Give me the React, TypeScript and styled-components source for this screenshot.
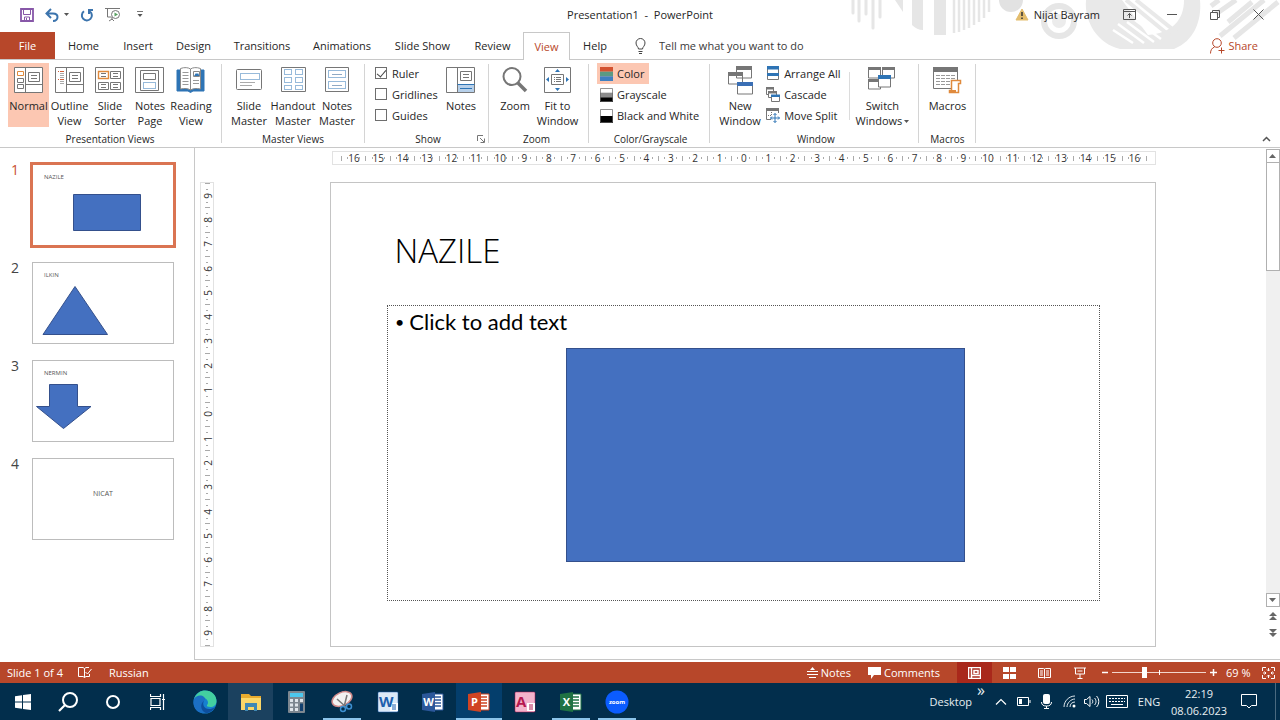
import React from "react";
import styled, { createGlobalStyle, css } from "styled-components";

const INK = "#262626";
const LINE = "#c8c8c8";
const BRAND = "#b7472a";
const BLUE = "#2e74b5";
const GREY = "#767676";
const SHAPE = "#4470c0";

const GlobalStyle = createGlobalStyle`
  * { box-sizing: border-box; }
  body {
    margin: 0;
    background: #fff;
    color: ${INK};
    font-family: "Open Sans", "Noto Sans", sans-serif;
    font-size: 11px;
    line-height: 15px;
  }
  button, input { font: inherit; color: inherit; }
  button { border: 0; padding: 0; background: none; }
  svg { display: block; flex: none; }
`;

const Page = styled.div`
  display: flex;
  flex-direction: column;
  min-height: 100vh;
`;

/* ---------- title bar and tabs ---------- */

const Header = styled.header`
  position: relative;
`;

const Decoration = styled.svg`
  position: absolute;
  top: 0;
  right: 0;
  z-index: -1;
`;

const TitleBar = styled.div`
  display: grid;
  grid-template-columns: 1fr auto 1fr;
  align-items: center;
  height: 30px;
  padding-bottom: 1px;
`;

const QuickAccess = styled.div`
  display: flex;
  align-items: center;
  gap: 11px;
  padding-left: 20px;
`;

const IconButton = styled.button`
  display: flex;
  align-items: center;
  gap: 5px;
`;

const DocTitle = styled.div`
  white-space: pre;
`;

const WindowTools = styled.div`
  display: flex;
  align-items: center;
  justify-content: flex-end;
  padding-right: 16px;
`;

const Account = styled.button`
  display: flex;
  align-items: center;
  gap: 5px;
  margin-right: 16px;
`;

const WindowButton = styled.button<{ $w: number }>`
  display: flex;
  justify-content: flex-end;
  width: ${(p) => p.$w}px;
`;

const TabRow = styled.nav`
  display: flex;
  align-items: stretch;
  height: 30px;
  padding-top: 2px;
  border-bottom: 1px solid ${LINE};
`;

const FileTab = styled.button`
  width: 55px;
  background: ${BRAND};
  color: #fff;
`;

const Tab = styled.button<{ $w: number; $active?: boolean }>`
  width: ${(p) => p.$w}px;
  white-space: nowrap;
  ${(p) =>
    p.$active &&
    css`
      border: 1px solid ${LINE};
      border-bottom: 0;
      margin-bottom: -1px;
      background: #fff;
      color: ${BRAND};
    `}
`;

const TellMe = styled.label`
  display: flex;
  align-items: center;
  gap: 13px;
  margin-left: 15px;
  flex: 1;
  input {
    flex: 1;
    max-width: 200px;
    border: 0;
    padding: 0;
    outline: 0;
    background: none;
  }
  input::placeholder { color: #3a3a3a; opacity: 1; }
`;

const ShareButton = styled.button`
  display: flex;
  align-items: center;
  gap: 3px;
  padding-right: 22px;
  color: ${BRAND};
`;

/* ---------- ribbon ---------- */

const Ribbon = styled.div`
  display: flex;
  height: 88px;
  padding-top: 3px;
  border-bottom: 1px solid ${LINE};
`;

const Group = styled.section<{ $l: number; $r: number }>`
  position: relative;
  display: flex;
  flex-direction: column;
  &::after {
    content: "";
    position: absolute;
    right: 0;
    top: 1px;
    height: 79px;
    border-right: 1px solid #d4d4d4;
  }
  padding: 0 ${(p) => p.$r + 1}px 0 ${(p) => p.$l}px;
`;

const Tools = styled.div`
  display: flex;
  height: 68px;
`;

const Caption = styled.h2`
  margin: 0;
  font-size: 10px;
  font-weight: 400;
  line-height: 16px;
  text-align: center;
`;

const Launcher = styled.button`
  position: absolute;
  right: 4px;
  bottom: 4px;
`;

const Large = styled.button<{ $w: number; $active?: boolean }>`
  display: flex;
  flex-direction: column;
  align-items: center;
  gap: 3px;
  width: ${(p) => p.$w}px;
  height: 64px;
  padding-top: 3px;
  white-space: nowrap;
  background: ${(p) => (p.$active ? "#fcc7b2" : "none")};
`;

const LargeLabel = styled.span`
  display: block;
  white-space: pre-line;
  svg { display: inline-block; margin-left: 2px; vertical-align: 2px; }
`;

const Stack = styled.div<{ $gap?: number }>`
  display: flex;
  flex-direction: column;
  align-items: flex-start;
  margin-right: ${(p) => p.$gap ?? 0}px;
`;

const Small = styled.button<{ $active?: boolean }>`
  display: flex;
  align-items: center;
  gap: 4px;
  height: 21px;
  padding: 0 5px 0 3px;
  white-space: nowrap;
  background: ${(p) => (p.$active ? "#fcc7b2" : "none")};
`;

const Check = styled.label`
  display: flex;
  align-items: center;
  gap: 5px;
  width: 66px;
  height: 21px;
  input {
    appearance: none;
    position: relative;
    flex: none;
    width: 12px;
    height: 12px;
    margin: 0 0 2px;
    border: 1px solid #6e6e6e;
    background: #fff;
  }
  input:checked::after {
    content: "";
    position: absolute;
    left: 3px;
    top: 0;
    width: 4px;
    height: 8px;
    border: solid #444;
    border-width: 0 1px 1px 0;
    transform: rotate(40deg);
  }
`;

const Divider = styled.div`
  width: 1px;
  height: 48px;
  margin-top: 9px;
  background: #dcdcdc;
`;

const Collapse = styled.button`
  align-self: flex-end;
  margin: 0 9px 5px auto;
`;

/* ---------- work area ---------- */

const Work = styled.main`
  display: flex;
  flex: 1;
`;

const SlideList = styled.ol`
  display: flex;
  flex-direction: column;
  gap: 16px;
  width: 195px;
  margin: 0 0 2px;
  padding: 16px 0 0 11px;
  list-style: none;
  border-right: 1px solid ${LINE};
`;

const SlideItem = styled.li`
  display: flex;
`;

const SlideNumber = styled.span<{ $active?: boolean }>`
  width: 21px;
  font-size: 14px;
  line-height: 12px;
  color: ${(p) => (p.$active ? "#c9502f" : "#444")};
`;

const Thumb = styled.button<{ $active?: boolean }>`
  position: relative;
  width: 142px;
  height: 82px;
  border: 1px solid ${(p) => (p.$active ? "#fff" : "#bcbcbc")};
  background: #fff;
  ${(p) =>
    p.$active &&
    css`
      outline: 3px solid #da7452;
      outline-offset: -1px;
    `}
`;

const ThumbTitle = styled.span<{ $centered?: boolean }>`
  position: absolute;
  left: 11px;
  top: 8px;
  font-size: 6px;
  line-height: 8px;
  color: #555;
  ${(p) =>
    p.$centered &&
    css`
      left: 0;
      right: 0;
      top: 31px;
      font-size: 7px;
      text-align: center;
    `}
`;

const Editor = styled.div`
  display: grid;
  grid-template-columns: 14px 1fr;
  grid-template-rows: 14px auto;
  align-content: start;
  row-gap: 17px;
  flex: 1;
  padding: 3px 0 0 5px;
  margin-bottom: 2px;
  border-bottom: 1px solid ${LINE};
`;

const TopRuler = styled.div`
  grid-column: 2;
  display: flex;
  align-items: center;
  margin: 0 109px 0 118px;
  padding: 0 8px;
  border: 1px solid #e2e2e2;
`;

const SideRuler = styled.div`
  display: flex;
  flex-direction: column;
  align-items: center;
  border: 1px solid #e2e2e2;
`;

const Mark = styled.span<{ $side?: boolean }>`
  display: flex;
  flex: 1;
  align-items: center;
  justify-content: center;
  flex-direction: ${(p) => (p.$side ? "column" : "row")};
  min-width: 0;
  min-height: 0;
  font-size: 10px;
  line-height: 12px;
  color: #333;
  b {
    width: 11px;
    font-weight: 400;
    text-align: center;
    transform: ${(p) => (p.$side ? "rotate(-90deg)" : "none")};
  }
  i {
    width: ${(p) => (p.$side ? 2 : 1)}px;
    height: ${(p) => (p.$side ? 1 : 2)}px;
    background: #aaa;
  }
`;

const Tick = styled.span<{ $side?: boolean }>`
  width: ${(p) => (p.$side ? 5 : 1)}px;
  height: ${(p) => (p.$side ? 1 : 5)}px;
  background: #aaa;
`;

const Slide = styled.article`
  position: relative;
  margin: 0 109px 0 116px;
  aspect-ratio: 16 / 9;
  border: 1px solid #c4c4c4;
`;

const SlideTitle = styled.h1`
  position: absolute;
  left: 7.7%;
  top: 9.9%;
  margin: 0;
  font-family: "Open Sans", sans-serif;
  font-size: 33px;
  font-weight: 300;
  line-height: 44px;
  color: #000;
`;

const Placeholder = styled.ul`
  position: absolute;
  left: 6.8%;
  top: 26.4%;
  width: 86.5%;
  height: 64%;
  margin: 0;
  padding: 3px 0 0 7px;
  list-style: none;
  border: 1px dotted #555;
  font-family: Lato, sans-serif;
  font-size: 22px;
  line-height: 26px;
  color: #000;
  li { display: flex; gap: 5px; }
  span { font-size: 16px; }
`;

const Rectangle = styled.div`
  position: absolute;
  left: 28.5%;
  top: 35.6%;
  width: 48.4%;
  height: 46.3%;
  border: 1px solid #34508c;
  background: ${SHAPE};
`;

const ScrollBar = styled.div`
  display: flex;
  flex-direction: column;
  align-items: center;
  width: 15px;
  margin-bottom: 2px;
  padding-top: 1px;
  border-bottom: 1px solid ${LINE};
`;

const ScrollButton = styled.button`
  display: flex;
  align-items: center;
  justify-content: center;
  width: 14px;
  height: 14px;
  border: 1px solid #b0b0b0;
  background: #fff;
`;

const ScrollTrack = styled.div`
  flex: 1;
  width: 14px;
  background: #f0f0f0;
`;

const ScrollThumb = styled.div`
  height: 25%;
  border: 1px solid #b0b0b0;
  border-top: 0;
  background: #fff;
`;

const PageJump = styled.button`
  height: 17px;
  &:last-child { margin-bottom: 18px; }
`;

/* ---------- status bar ---------- */

const StatusBar = styled.footer`
  display: flex;
  align-items: center;
  height: 21px;
  padding-left: 7px;
  background: ${BRAND};
  color: #fff;
`;

const StatusText = styled.span`
  margin-right: 15px;
`;

const Spacer = styled.div`
  flex: 1;
`;

const StatusButton = styled.button`
  display: flex;
  align-items: center;
  gap: 3px;
  margin-right: 17px;
`;

const ViewButton = styled.button<{ $active?: boolean }>`
  display: flex;
  align-items: center;
  justify-content: center;
  width: 35px;
  height: 21px;
  background: ${(p) => (p.$active ? "#a9281b" : "none")};
`;

const ZoomRange = styled.input`
  appearance: none;
  width: 94px;
  height: 13px;
  margin: 0 4px;
  background:
    linear-gradient(#fff, #fff) 50% 50% / 1px 5px no-repeat,
    linear-gradient(#f3d5cc, #f3d5cc) 0 50% / 100% 1px no-repeat;
  &::-webkit-slider-thumb {
    appearance: none;
    width: 5px;
    height: 11px;
    background: #fff;
  }
`;

const ZoomValue = styled.button`
  width: 24px;
  margin: 0 12px 0 9px;
  white-space: nowrap;
`;

const FitButton = styled.button`
  margin-right: 5px;
`;

/* ---------- taskbar ---------- */

const TaskBar = styled.nav`
  display: flex;
  height: 37px;
  background: #022e4c;
  color: #e8eef2;
`;

const TaskButton = styled.button<{ $w: number; $open?: boolean; $bg?: string }>`
  display: flex;
  align-items: center;
  justify-content: center;
  width: ${(p) => p.$w}px;
  background: ${(p) => p.$bg ?? "none"};
  ${(p) =>
    p.$open &&
    css`
      background-image: linear-gradient(#8cc4ea, #8cc4ea);
      background-size: ${p.$bg ? "100%" : "38px"} 2px;
      background-position: bottom;
      background-repeat: no-repeat;
    `}
`;

const SystemGroup = styled.div`
  display: flex;
  margin-right: 2px;
`;

const Tray = styled.div`
  display: flex;
  align-items: center;
`;

const TrayButton = styled.button<{ $w: number }>`
  display: flex;
  justify-content: center;
  width: ${(p) => p.$w}px;
`;

const More = styled.button`
  align-self: flex-start;
  width: 18px;
  font-size: 16px;
  line-height: 14px;
`;

const Clock = styled.time`
  width: 66px;
  line-height: 17px;
  text-align: center;
`;

const ShowDesktop = styled.button`
  width: 5px;
  height: 100%;
  border-left: 1px solid #4a6a80;
`;

/* ---------- icons ---------- */

type P = { children: React.ReactNode; w?: number; h?: number; c?: string };
const Ico = ({ children, w = 30, h = 29, c = GREY }: P) => (
  <svg width={w} height={h} viewBox={`0 0 ${w} ${h}`} fill="none" stroke={c} aria-hidden="true">
    {children}
  </svg>
);

const NormalIcon = () => (
  <Ico>
    <path d="M.5 1.5h28v25h-28z" fill="#fff" />
    <path d="M11.5 1.5v25M11.5 18.5h17" />
    <path d="M3.500 5.500h6v4h-6z" stroke="#e08a3c" />
    <path d="M3.500 12.500h6v4h-6zM3.500 18.500h6v4h-6z" />
    <path d="M14.500 6.500h11v9h-11zM17 9.500h6M17 12.500h6" />
  </Ico>
);
const OutlineIcon = () => (
  <Ico>
    <path d="M.5 1.500h28v25h-28zM11.500 1.500v25M11.500 18.500h17M14.500 6.500h11v9h-11zM17 9.500h6M17 12.500h6" />
    <path d="M3 5.500h1M5 5.500h4M3 13.500h1M5 13.500h4" stroke="#d0603a" />
    <path d="M5 7.500h4M5 9.500h4M5 11.500h4M5 15.500h4M5 17.500h4" stroke="#aaa" />
  </Ico>
);
const SorterIcon = () => (
  <Ico>
    <path d="M.5 1.500h28v25h-28zM15.500 5.500h10v7h-10zM3.500 16.500h10v7h-10zM15.500 16.500h10v7h-10zM18 7.500h5M18 10.500h5M6 18.500h5M6 21.500h5M18 18.500h5M18 21.500h5" />
    <path d="M3.500 5.500h10v7h-10z" stroke="#e08a3c" strokeWidth="1.400" />
    <path d="M6 7.500h5M6 10.500h5" />
  </Ico>
);
const NotesPageIcon = () => (
  <Ico>
    <path d="M.5 1.500h28v25h-28zM5.500 4.500h18v20h-18zM8.500 7.500h12v6h-12z" />
    <path d="M8.500 16.500h12v6h-12z" stroke={BLUE} strokeDasharray="1 1" />
  </Ico>
);
const ReadingIcon = () => (
  <Ico>
    <path d="M1 4h27v21H17l-2.500 1.500L12 25H1z" fill={BLUE} stroke={BLUE} />
    <path d="M4.500 2.500c4-1.500 8-1 10 .5v21c-2-1.500-6-2-10-1zM24.500 2.500c-4-1.500-8-1-10 .5v21c2-1.500 6-2 10-1z" fill="#fff" stroke="#8a8a8a" />
    <path d="M6.500 6.500h6M6.500 9.500h6M6.500 12.500h6M6.500 15.500h6M6.500 18.500h6M17 14.500h6M17 17.500h6" stroke="#999" />
    <path d="M17.500 10.500v-5h6v5z" stroke="#888" />
    <path d="M18 10l2-3 1 1 1-1 1.500 3z" fill={BLUE} stroke="none" />
  </Ico>
);
const SlideMasterIcon = () => (
  <Ico>
    <rect x="2.500" y="3.500" width="25" height="20" rx="1" />
    <path d="M6.500 7.500h19v6h-19z" stroke={BLUE} strokeDasharray="1 1" />
    <path d="M6 16.500h15M6 19.500h12" stroke="#aaa" />
  </Ico>
);
const HandoutIcon = () => (
  <Ico>
    <path d="M3.500 1.500h24v24h-24z" />
    <path d="M6.500 3.500h7v5h-7zM17.500 3.500h7v5h-7zM6.500 11.500h7v5h-7zM17.500 11.500h7v5h-7zM6.500 19.500h7v4h-7zM17.500 19.500h7v4h-7z" stroke={BLUE} strokeDasharray="1 1" />
  </Ico>
);
const NotesMasterIcon = () => (
  <Ico>
    <path d="M3.500 1.500h23v24h-23z" />
    <path d="M6.500 4.500h17v7h-17zM6.500 15.500h17v7h-17z" stroke={BLUE} strokeDasharray="1 1" />
    <path d="M10 8.500h10M10 19.500h10" stroke="#8fa9c4" />
  </Ico>
);
const NotesIcon = () => (
  <Ico>
    <path d="M12 18h17v8H12z" fill="#b7d0ea" stroke="none" />
    <path d="M.5 1.500h28v25h-28zM11.500 1.500v25M14.500 5.500h11v9h-11zM17 8.500h6M17 11.500h6" />
    <path d="M11.500 18.500h17M14 22.500h12" stroke={BLUE} />
  </Ico>
);
const ZoomIcon = () => (
  <Ico>
    <circle cx="12" cy="10.500" r="8.500" strokeWidth="2" />
    <path d="M18 17l8 8" strokeWidth="3.500" />
  </Ico>
);
const FitIcon = () => (
  <Ico>
    <path d="M1.500 1.500h26v25h-26zM8.500 8.500h12v10h-12zM11 11.500h1M13 11.500h5M11 13.500h1M13 13.500h5M11 15.500h1M13 15.500h5" />
    <path d="M14.500 3l2.500 3h-5zM14.500 25l2.500-3h-5zM3 13.500l3-2.500v5zM26 13.500l-3-2.500v5z" fill={BLUE} stroke="none" />
  </Ico>
);
const NewWindowIcon = () => (
  <Ico>
    <path d="M11.500 3v9h15V3zM3.500 9v9h14V9z" fill="#fff" />
    <path d="M11 0h16v4H11zM3 6h15v4H3z" fill={GREY} stroke="none" />
    <path d="M12.500 17v11h15V17z" fill="#fff" />
    <path d="M12 16h16v4H12z" fill="#3a6fb5" stroke="none" />
  </Ico>
);
const SwitchIcon = () => (
  <Ico>
    <path d="M1.500 3v9h12V3zM15.500 3v9h12V3zM1.500 14v9h12v-9z" fill="#fff" />
    <path d="M1 1h13v3H1zM15 1h13v3H15zM1 13h13v3H1z" fill={GREY} stroke="none" />
    <path d="M11.500 11v10h12V11z" fill="#fff" />
    <path d="M11 9h13v4H11z" fill={BLUE} stroke="none" />
  </Ico>
);
const MacrosIcon = () => (
  <Ico>
    <path d="M1.500 2.500h24v20h-24z" fill="#fff" />
    <path d="M1 1h25v5H1z" fill={GREY} stroke="none" />
    <path d="M4 9.500h19M4 12.500h19M4 15.500h14M4 18.500h14" strokeDasharray="4 1" stroke="#999" />
    <path d="M19.500 14.500h9v3h-2v9h-9v-2h2z" fill="#fff" stroke="#e08a3c" strokeWidth="1.500" />
    <path d="M17 24h7v3h-7z" fill="#e08a3c" stroke="none" />
  </Ico>
);

const Swatch = ({ colors }: { colors: string[] }) => (
  <Ico w={13} h={14}>
    {colors.map((c, i) => {
      const h = 14 / colors.length;
      return <rect key={i} x="0" y={i * h} width="13" height={h} fill={c} stroke="none" />;
    })}
    {colors.includes("#fff") && <path d="M.5 .5h12v13H.5z" stroke="#666" strokeWidth=".7" />}
  </Ico>
);
const ArrangeIcon = () => (
  <Ico w={14} h={15}>
    <path d="M1.500 1.500h11v12h-11z" fill="#fff" />
    <path d="M1 0h12v3.500H1zM1 7h12v3H1z" fill={BLUE} stroke="none" />
  </Ico>
);
const CascadeIcon = () => (
  <Ico w={14} h={15}>
    <path d="M.5 1.500h7v6h-7z" fill="#fff" />
    <path d="M0 0h8v2.500H0z" fill={GREY} stroke="none" />
    <path d="M2.500 5.500h8v5h-8z" fill="#fff" />
    <path d="M2 4h9v2.500H2z" fill={GREY} stroke="none" />
    <path d="M5.500 9.500h8v5h-8z" fill="#fff" />
    <path d="M5 7.500h9v2.500H5z" fill={BLUE} stroke="none" />
  </Ico>
);
const SplitIcon = () => (
  <Ico w={14} h={15}>
    <path d="M5 11.500H.5V1.500h12V5" />
    <path d="M0 0h13v3H0z" fill={GREY} stroke="none" />
    <path d="M2 7.500h4M5.500 4v3" strokeDasharray="1 1" />
    <path d="M9 5.500v9M4.500 10h9M7.500 7L9 5.500 10.500 7M7.500 13L9 14.500l1.500-1.500M6 8.500L4.500 10 6 11.500M12 8.500l1.500 1.500-1.500 1.500" stroke={BLUE} />
  </Ico>
);
const Caret = ({ c = "#555" }: { c?: string }) => (
  <Ico w={5} h={3}>
    <path d="M0 0h5L2.500 3z" fill={c} stroke="none" />
  </Ico>
);

const Backdrop = () => (
  <Decoration width="430" height="50" viewBox="0 0 430 50" fill="none" stroke="#e6e6e6" aria-hidden="true">
    <g strokeWidth="3" strokeLinecap="round">
      <path d="M3 0v13M9 0v21M16 0v14M23 0v28M30 0v17" />
    </g>
    <path d="M45 0h8v12zM62 0h11v30c-4 0-8-2-11-5zM84 0h12v35H84z" fill="#e6e6e6" stroke="none" />
    <path d="M104 0v33M109 0v32M114 0v30M119 0v28M124 0v25M129 0v22M134 0v18M139 0v12" strokeWidth="2.500" />
    <circle cx="161" cy="0" r="12" fill="#e2e2e2" stroke="none" />
    <circle cx="209" cy="21" r="15" strokeWidth="6" />
    <circle cx="209" cy="21" r="7" fill="#ececec" stroke="none" />
    <path d="M236 0c-2 22 12 44 34 49h54c20-8 28-28 26-49h-16c0 20-12 33-36 35L272 0z" fill="#e9e9e9" stroke="none" />
    <path d="M276 0l44 36M286 0l40 32" stroke="#e9e9e9" strokeWidth="4" />
    <path d="M263 30l20 13M268 24l26 19M277 22l27 20M285 20l26 19" stroke="#fff" strokeWidth="2.500" />
    <path d="M361 6l8-6M366 14L386 0M370 36L414 0M378 22l24-20M384 38l44-36" strokeWidth="5" />
  </Decoration>
);

/* ---------- content ---------- */

const presentationViews: [string, () => React.JSX.Element, number][] = [
  ["Normal", NormalIcon, 41],
  ["Outline\nView", OutlineIcon, 41],
  ["Slide\nSorter", SorterIcon, 40],
  ["Notes\nPage", NotesPageIcon, 40],
  ["Reading\nView", ReadingIcon, 42],
];
const masterViews: [string, () => React.JSX.Element][] = [
  ["Slide\nMaster", SlideMasterIcon],
  ["Handout\nMaster", HandoutIcon],
  ["Notes\nMaster", NotesMasterIcon],
];
const tabs: [string, number][] = [
  ["Home", 57],
  ["Insert", 52],
  ["Design", 59],
  ["Transitions", 78],
  ["Animations", 82],
  ["Slide Show", 79],
  ["Review", 61],
  ["View", 47],
  ["Help", 50],
];

const scale = (n: number) => Array.from({ length: n * 2 + 1 }, (_, i) => Math.abs(n - i));

const Marks = ({ max, side }: { max: number; side?: boolean }) => (
  <>
    <Tick $side={side} />
    {scale(max).map((n, i) => (
      <React.Fragment key={i}>
        <Mark $side={side}>
          <i />
          <b>{n}</b>
          <i />
        </Mark>
        <Tick $side={side} />
      </React.Fragment>
    ))}
  </>
);

const ThumbShape = ({ d }: { d: string }) => (
  <svg width="140" height="80" viewBox="0 0 140 80" fill={SHAPE} stroke="#34508c" aria-hidden="true">
    <path d={d} />
  </svg>
);

const slides = [
  { title: "NAZILE", d: "M40.500 29.500h67v36h-67z" },
  { title: "ILKIN", d: "M42 23.500L74.500 71.500H10z" },
  { title: "NERMIN", d: "M16.500 23.500h28v22h13.500L30.500 67.500 3.500 45.500h13z" },
  { title: "NICAT", d: "" },
];

const OfficeIcon = ({ letter, color, light }: { letter: string; color: string; light?: boolean }) => (
  <svg width="22" height="22" viewBox="0 0 22 22" aria-hidden="true">
    {light ? (
      <>
        <rect x="1" y="1" width="20" height="20" rx="1" fill={color === "#b5174f" ? "#f3b3cc" : "#dbe9f7"} stroke={color} strokeWidth=".5" />
        <path d="M13 12h8v8h-8z" fill="#fff" />
        <path d="M15 14h4M15 16h4M15 18h4" stroke={color} />
        <text x="2" y="16" fontSize="15" fontWeight="700" fill={color}>{letter}</text>
      </>
    ) : (
      <>
        <path d="M11 3h10v16H11z" fill="#fff" stroke={color} />
        <path d="M13 6h6M13 9h6M13 12h6M13 15h6" stroke={color} strokeWidth="1.500" />
        <path d="M0 3l13-2v20L0 19z" fill={color} />
        <text x="6.500" y="15" fontSize="11" fontWeight="700" textAnchor="middle" fill="#fff">{letter}</text>
      </>
    )}
  </svg>
);

export default function App() {
  return (
    <Page>
      <GlobalStyle />
      <Header>
        <Backdrop />
        <TitleBar>
          <QuickAccess>
            <IconButton aria-label="Save">
              <Ico w={14} h={14} c="#8757a8">
                <path d="M1 1h12v12H1z" strokeWidth="1.800" />
                <path d="M3.500 1.500v5h7v-5M4.500 13v-4h5v4M6.500 10v3" />
              </Ico>
            </IconButton>
            <IconButton aria-label="Undo">
              <Ico w={14} h={14} c="#3c74ad">
                <path d="M1.500 5.500h6.500c3 0 4.500 1.500 4.500 3.500s-1.500 4-4.500 4M6 1L1.500 5.500 6 10" strokeWidth="2" />
              </Ico>
              <Caret />
            </IconButton>
            <IconButton aria-label="Redo">
              <Ico w={14} h={14} c="#3c74ad">
                <path d="M4 3.300a5 5 0 1 0 6 .2M13 2H9v4" strokeWidth="2" />
              </Ico>
            </IconButton>
            <IconButton aria-label="Start from beginning">
              <Ico w={16} h={15}>
                <path d="M0 1.500h15M2.500 2v8h4M7 10v3M4 14l3-2 2 2" />
                <circle cx="10.500" cy="7.500" r="4" fill="#fff" />
                <path d="M9.500 5.500l3.500 2-3.500 2z" fill="#57a05f" stroke="none" />
              </Ico>
            </IconButton>
            <IconButton aria-label="Customize quick access toolbar">
              <Ico w={16} h={7}>
                <path d="M5 .5h6" />
                <path d="M5.500 3h5L8 6z" fill="#555" stroke="none" />
              </Ico>
            </IconButton>
          </QuickAccess>
          <DocTitle>{"Presentation1  -  PowerPoint"}</DocTitle>
          <WindowTools>
            <Account>
              <Ico w={14} h={13}>
                <path d="M7 1l6 11H1z" fill="#e3bd6e" stroke="#e3bd6e" strokeLinejoin="round" />
                <path d="M7 4v4M7 9.500v1.500" stroke="#333" strokeWidth="1.500" />
              </Ico>
              Nijat Bayram
            </Account>
            <WindowButton $w={20} aria-label="Ribbon display options">
              <Ico w={13} h={11} c="#555">
                <path d="M.5 .5h12v10H.5zM.5 2.500h12M6.500 9V4.500M4.500 6.500l2-2 2 2" />
              </Ico>
            </WindowButton>
            <WindowButton $w={41} aria-label="Minimize">
              <Ico w={10} h={1} c="#555"><path d="M0 .5h10" /></Ico>
            </WindowButton>
            <WindowButton $w={43} aria-label="Restore">
              <Ico w={10} h={10} c="#555"><path d="M.5 2.500h7v7h-7zM2.500 2.500v-2h7v7h-2" /></Ico>
            </WindowButton>
            <WindowButton $w={44} aria-label="Close">
              <Ico w={11} h={11} c="#555"><path d="M.5 .5l10 10M10.500 .5l-10 10" /></Ico>
            </WindowButton>
          </WindowTools>
        </TitleBar>
        <TabRow>
          <FileTab>File</FileTab>
          {tabs.map(([name, w]) => (
            <Tab key={name} $w={w} $active={name === "View"}>{name}</Tab>
          ))}
          <TellMe>
            <Ico w={11} h={16} c="#444">
              <path d="M3.500 11c0-2-2.500-3-2.500-6a4.500 4.500 0 0 1 9 0c0 3-2.500 4-2.500 6zM3.500 13.500h4M4 15.500h3" />
            </Ico>
            <input aria-label="Tell me what you want to do" placeholder="Tell me what you want to do" />
          </TellMe>
          <ShareButton>
            <Ico w={15} h={16} c={BRAND}>
              <circle cx="7" cy="5" r="4.300" />
              <path d="M.5 15.500c0-3.500 1.500-5.500 4-6.500M8.500 12.500h6M11.500 9.500v6" />
            </Ico>
            Share
          </ShareButton>
        </TabRow>
      </Header>

      <Ribbon>
        <Group $l={8} $r={9}>
          <Tools>
            {presentationViews.map(([label, Icon, w]) => (
              <Large key={label} $w={w} $active={label === "Normal"}>
                <Icon />
                <LargeLabel>{label}</LargeLabel>
              </Large>
            ))}
          </Tools>
          <Caption>Presentation Views</Caption>
        </Group>
        <Group $l={5} $r={5}>
          <Tools>
            {masterViews.map(([label, Icon]) => (
              <Large key={label} $w={44}>
                <Icon />
                <LargeLabel>{label}</LargeLabel>
              </Large>
            ))}
          </Tools>
          <Caption>Master Views</Caption>
        </Group>
        <Group $l={10} $r={7}>
          <Tools>
            <Stack>
              <Check><input type="checkbox" defaultChecked />Ruler</Check>
              <Check><input type="checkbox" />Gridlines</Check>
              <Check><input type="checkbox" />Guides</Check>
            </Stack>
            <Large $w={40}>
              <NotesIcon />
              <LargeLabel>Notes</LargeLabel>
            </Large>
          </Tools>
          <Caption>Show</Caption>
          <Launcher aria-label="Show options">
            <Ico w={8} h={8}><path d="M.5 6V.5H6M3 3l4 4M7.500 3.500v4h-4" /></Ico>
          </Launcher>
        </Group>
        <Group $l={5} $r={9}>
          <Tools>
            <Large $w={42}><ZoomIcon /><LargeLabel>Zoom</LargeLabel></Large>
            <Large $w={43}><FitIcon /><LargeLabel>{"Fit to\nWindow"}</LargeLabel></Large>
          </Tools>
          <Caption>Zoom</Caption>
        </Group>
        <Group $l={8} $r={5}>
          <Tools>
            <Stack>
              <Small $active><Swatch colors={["#d35230", "#5b9a83", "#3f7fc0"]} />Color</Small>
              <Small><Swatch colors={["#fff", "#8c8c8c", "#000"]} />Grayscale</Small>
              <Small><Swatch colors={["#fff", "#000"]} />Black and White</Small>
            </Stack>
          </Tools>
          <Caption>Color/Grayscale</Caption>
        </Group>
        <Group $l={7} $r={4}>
          <Tools>
            <Large $w={46}><NewWindowIcon /><LargeLabel>{"New\nWindow"}</LargeLabel></Large>
            <Stack $gap={4}>
              <Small><ArrangeIcon />Arrange All</Small>
              <Small><CascadeIcon />Cascade</Small>
              <Small><SplitIcon />Move Split</Small>
            </Stack>
            <Divider />
            <Large $w={64}><SwitchIcon /><LargeLabel>{"Switch\nWindows"}<Caret /></LargeLabel></Large>
          </Tools>
          <Caption>Window</Caption>
        </Group>
        <Group $l={4} $r={4}>
          <Tools>
            <Large $w={48}><MacrosIcon /><LargeLabel>Macros</LargeLabel></Large>
          </Tools>
          <Caption>Macros</Caption>
        </Group>
        <Collapse aria-label="Collapse the ribbon">
          <Ico w={9} h={6} c="#555"><path d="M1 5l3.500-3.500L8 5" strokeWidth="1.500" /></Ico>
        </Collapse>
      </Ribbon>

      <Work>
        <SlideList>
          {slides.map((s, i) => (
            <SlideItem key={s.title}>
              <SlideNumber $active={i === 0}>{i + 1}</SlideNumber>
              <Thumb $active={i === 0}>
                {s.d && <ThumbShape d={s.d} />}
                <ThumbTitle $centered={!s.d}>{s.title}</ThumbTitle>
              </Thumb>
            </SlideItem>
          ))}
        </SlideList>
        <Editor>
          <TopRuler><Marks max={16} /></TopRuler>
          <SideRuler><Marks max={9} side /></SideRuler>
          <Slide>
            <SlideTitle>NAZILE</SlideTitle>
            <Placeholder>
              <li><span>•</span>Click to add text</li>
            </Placeholder>
            <Rectangle />
          </Slide>
        </Editor>
        <ScrollBar>
          <ScrollButton aria-label="Scroll up">
            <Ico w={7} h={4}><path d="M0 4h7L3.500 0z" fill="#666" stroke="none" /></Ico>
          </ScrollButton>
          <ScrollTrack><ScrollThumb /></ScrollTrack>
          <ScrollButton aria-label="Scroll down">
            <Ico w={7} h={4}><path d="M0 0h7L3.500 4z" fill="#666" stroke="none" /></Ico>
          </ScrollButton>
          <PageJump aria-label="Previous slide">
            <Ico w={8} h={8}><path d="M0 4h8L4 0zM0 8h8L4 4z" fill="#666" stroke="none" /></Ico>
          </PageJump>
          <PageJump aria-label="Next slide">
            <Ico w={8} h={8}><path d="M0 0h8L4 4zM0 4h8L4 8z" fill="#666" stroke="none" /></Ico>
          </PageJump>
        </ScrollBar>
      </Work>

      <StatusBar>
        <StatusText>Slide 1 of 4</StatusText>
        <StatusButton aria-label="Spelling">
          <Ico w={14} h={13} c="#fff">
            <path d="M6.500 11.500L5 10.500H.5v-9H5l1.500 1 1.500-1h3M6.500 2.500v9l1.500-1h3.500V8M7.500 6l2 2 4-5" />
          </Ico>
        </StatusButton>
        <StatusText>Russian</StatusText>
        <Spacer />
        <StatusButton>
          <Ico w={11} h={11} c="#fff"><path d="M0 4.500h11M0 7.500h11M2 10.500h7" /><path d="M5.500 0L8 3H3z" fill="#fff" stroke="none" /></Ico>
          Notes
        </StatusButton>
        <StatusButton>
          <Ico w={13} h={13}><path d="M0 1h13v8H6l-3 4V9H0z" fill="#fff" stroke="none" /></Ico>
          Comments
        </StatusButton>
        <ViewButton $active aria-label="Normal view">
          <Ico w={13} h={12} c="#fff"><path d="M.5 .5h12v11H.5zM3.500 .5v11M3.500 8.500h9M6 3.500h4v3H6z" strokeWidth="1.500" /></Ico>
        </ViewButton>
        <ViewButton aria-label="Slide sorter">
          <Ico w={13} h={12}><path d="M0 0h6v5H0zM7 0h6v5H7zM0 7h6v5H0zM7 7h6v5H7z" fill="#fff" stroke="none" /></Ico>
        </ViewButton>
        <ViewButton aria-label="Reading view">
          <Ico w={13} h={12} c="#fff"><path d="M6.500 2v9M.5 1.500h5l1 .5 1-.5h5v9h-5l-1 1-1-1h-5zM2 4h3M2 6h3M2 8h3M8 4h3M8 6h3M8 8h3" /></Ico>
        </ViewButton>
        <ViewButton aria-label="Slide show">
          <Ico w={12} h={12} c="#fff"><path d="M0 1h12M1.500 1v6h9V1M3.500 4h5M6 7v4M3.500 11.500h5" /></Ico>
        </ViewButton>
        <IconButton aria-label="Zoom out"><Ico w={11} h={11} c="#fff"><path d="M5 5.500h6" strokeWidth="1.500" /></Ico></IconButton>
        <ZoomRange type="range" min="0" max="100" defaultValue="34" aria-label="Zoom" />
        <IconButton aria-label="Zoom in"><Ico w={7} h={7} c="#fff"><path d="M0 3.500h7M3.500 0v7" strokeWidth="1.500" /></Ico></IconButton>
        <ZoomValue>69 %</ZoomValue>
        <FitButton aria-label="Fit slide to window">
          <Ico w={13} h={12} c="#fff"><path d="M.5 4V.5H4M9 .5h3.500V4M12.500 8v3.500H9M4 11.500H.5V8M6.500 1v3M6.500 8v3M1 6h3M9 6h3M5 2.500L6.500 4 8 2.500M5 9.500L6.500 8 8 9.500M2.500 4.500L4 6 2.500 7.500M10.500 4.500L9 6l1.500 1.500" /></Ico>
        </FitButton>
      </StatusBar>

      <TaskBar>
        <SystemGroup>
          <TaskButton $w={45} aria-label="Start">
            <Ico w={16} h={16}><path d="M0 2.200L7 1.200V7.500H0zM8 1l8-1v7.500H8zM0 8.500h7v6.300L0 13.800zM8 8.500h8V16l-8-1z" fill="#fff" stroke="none" /></Ico>
          </TaskButton>
          <TaskButton $w={45} aria-label="Search">
            <Ico w={22} h={22} c="#fff"><circle cx="13" cy="9" r="7" strokeWidth="2" /><path d="M8 14l-6 6" strokeWidth="2.200" /></Ico>
          </TaskButton>
          <TaskButton $w={45} aria-label="Cortana">
            <Ico w={16} h={16} c="#fff"><circle cx="8" cy="8" r="6" strokeWidth="2" /></Ico>
          </TaskButton>
          <TaskButton $w={45} aria-label="Task view">
            <Ico w={16} h={16} c="#fff"><path d="M1 4.500h9v7H1zM.5 0v2.500h10V0M.5 16v-2.500h10V16M13.500 0v16M12 5.500h3" strokeWidth="1.200" /></Ico>
          </TaskButton>
        </SystemGroup>
        <TaskButton $w={46} aria-label="Edge">
          <svg width="24" height="24" viewBox="0 0 24 24" aria-hidden="true">
            <circle cx="12" cy="12" r="11.500" fill="#1680d0" />
            <path d="M1 9C3 3 8 .5 12 .5c7 0 11.500 5 11.500 10.500 0 4-3 6-6 6s-4-1-3.500-2c2-2 1-6-3-7-4-.8-8 0-10 1z" fill="#43cfa0" />
            <path d="M1 9c2-3.500 7-4.500 10-2 2 1.500 1 3 0 4-3 3-1 9 5 10-7 5-16 0-15.500-9z" fill="#1b6fc4" />
            <path d="M11 11c-2 3 0 8 5 8 2 0 4-.5 6-2-2 4-6 6-9 6-6-2-6-10-2-12z" fill="#0d4f9e" />
          </svg>
        </TaskButton>
        <TaskButton $w={45} $bg="#1b415f" aria-label="File Explorer">
          <svg width="20" height="18" viewBox="0 0 20 18" aria-hidden="true">
            <path d="M0 1h8l2 2h10v14H0z" fill="#e8ab2e" />
            <path d="M0 5h20v12H0z" fill="#fbd768" />
            <path d="M4 18v-8h12v8h-3v-4H7v4z" fill="#3f88b5" />
          </svg>
        </TaskButton>
        <TaskButton $w={46} aria-label="Calculator">
          <svg width="17" height="22" viewBox="0 0 17 22" aria-hidden="true">
            <rect width="17" height="22" rx="1" fill="#7d8790" />
            <path d="M2 2h13v4H2z" fill="#4cc8ee" />
            <path d="M2 8h3v3H2zM7 8h3v3H7zM12 8h3v3h-3zM2 12.500h3v3H2zM7 12.500h3v3H7zM2 17h3v3H2zM7 17h3v3H7z" fill="#dfe5ea" />
            <path d="M12 12.500h3V20h-3z" fill="#12406f" />
          </svg>
        </TaskButton>
        <TaskButton $w={46} $open aria-label="Snipping Tool">
          <svg width="24" height="24" viewBox="0 0 24 24" aria-hidden="true">
            <ellipse cx="12" cy="9" rx="10.500" ry="6.500" transform="rotate(-25 12 9)" fill="#f2f2f2" stroke="#d08a8a" strokeWidth="1.500" />
            <path d="M7 9l9 8M17 5l-3 12" stroke="#777" strokeWidth="1.500" fill="none" />
            <circle cx="13" cy="19" r="2.500" fill="none" stroke="#3d8fd0" strokeWidth="1.500" />
            <circle cx="19" cy="16.500" r="2.500" fill="none" stroke="#3d8fd0" strokeWidth="1.500" />
          </svg>
        </TaskButton>
        <TaskButton $w={45} aria-label="Word viewer"><OfficeIcon letter="W" color="#1d5fae" light /></TaskButton>
        <TaskButton $w={46} aria-label="Word"><OfficeIcon letter="W" color="#2b579a" /></TaskButton>
        <TaskButton $w={46} $open $bg="#043e6c" aria-label="PowerPoint"><OfficeIcon letter="P" color="#d04423" /></TaskButton>
        <TaskButton $w={46} aria-label="Access"><OfficeIcon letter="A" color="#b5174f" light /></TaskButton>
        <TaskButton $w={46} $open aria-label="Excel"><OfficeIcon letter="X" color="#1f7244" /></TaskButton>
        <TaskButton $w={46} $open aria-label="Zoom">
          <svg width="24" height="24" viewBox="0 0 24 24" aria-hidden="true">
            <circle cx="12" cy="12" r="11.500" fill="#0b5cff" />
            <text x="12" y="14" fontSize="6" fontWeight="700" textAnchor="middle" fill="#fff">zoom</text>
          </svg>
        </TaskButton>
        <Spacer />
        <Tray>
          <span>Desktop</span>
          <More aria-label="More">»</More>
          <TrayButton $w={22} aria-label="Hidden icons"><Ico w={12} h={7} c="#fff"><path d="M1 6.500l5-5 5 5" strokeWidth="1.200" /></Ico></TrayButton>
          <TrayButton $w={24} aria-label="Battery">
            <Ico w={14} h={9} c="#fff"><path d="M.5 .5h11v8H.5zM13 3v3" /><path d="M2 2h3v5H2z" fill="#fff" stroke="none" /></Ico>
          </TrayButton>
          <TrayButton $w={20} aria-label="Microphone">
            <Ico w={11} h={15} c="#fff"><rect x="2.500" y=".5" width="6" height="9" rx="1" fill="#fff" /><path d="M.5 8c0 3 2 4 5 4s5-1 5-4M5.500 12v2M3 14.500h5" /></Ico>
          </TrayButton>
          <TrayButton $w={26} aria-label="Network">
            <Ico w={13} h={13} c="#dfe8ee"><path d="M1 12C1 6 6 1 12 1M4 12c0-4 4-8 8-8M7 12c0-3 2-5 5-5" /><circle cx="11" cy="11" r="1.500" fill="#fff" stroke="none" /></Ico>
          </TrayButton>
          <TrayButton $w={20} aria-label="Volume">
            <Ico w={16} h={13} c="#fff"><path d="M.5 4.500h2L6 1.500v10L2.500 8.500h-2zM8 4.500c1 1 1 3 0 4M10.500 3c2 2 2 5 0 7M12.500 1c3 3 3 8 0 11" /></Ico>
          </TrayButton>
          <TrayButton $w={30} aria-label="Touch keyboard">
            <Ico w={22} h={13} c="#fff"><path d="M.5 .5h21v12H.5z" /><path d="M3 3.500h16M3 6.500h16" strokeDasharray="2 1" /><path d="M5 9.500h12" /></Ico>
          </TrayButton>
          <TrayButton $w={34}>ENG</TrayButton>
          <Clock>22:19<br />08.06.2023</Clock>
          <TrayButton $w={34} aria-label="Notifications">
            <Ico w={16} h={15} c="#fff"><path d="M.5 .5h15v11h-5L8 14l-2.500-2.500h-5z" /></Ico>
          </TrayButton>
          <TrayButton $w={9} aria-hidden="true" />
          <ShowDesktop aria-label="Show desktop" />
        </Tray>
      </TaskBar>
    </Page>
  );
}
